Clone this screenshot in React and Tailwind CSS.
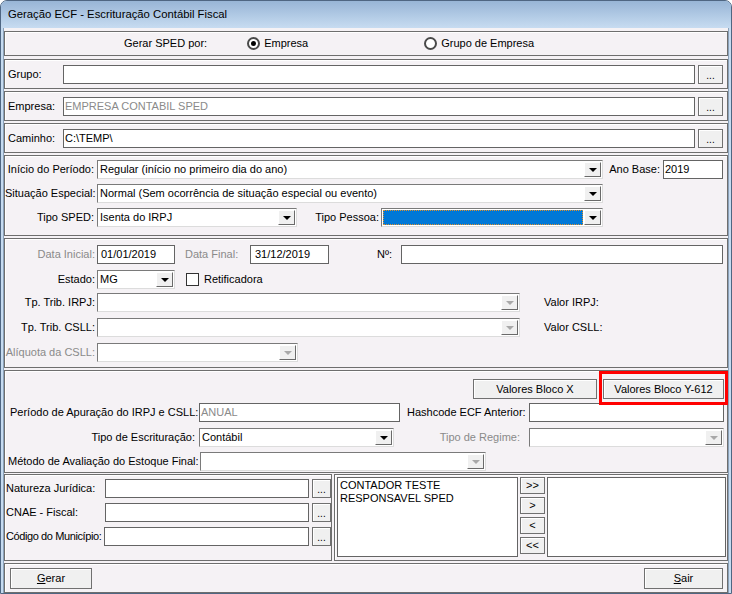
import React from "react";

const font = { fontFamily: '"Liberation Sans", Arial, sans-serif' };

const Panel = ({ className = "", children }) => (
  <div className={`shrink-0 border border-[#6e6e6e] shadow-[inset_1px_1px_0_#ffffff] ${className}`}>{children}</div>
);

const TextBox = ({ w, value = "", gray = false, className = "" }) => (
  <div
    className={`h-[19px] shrink-0 border border-[#646464] bg-white flex items-center pl-[1px] leading-none whitespace-nowrap overflow-hidden ${gray ? "text-[#8a8a8a]" : "text-black"} ${className}`}
    style={{ width: w }}
  >
    {value}
  </div>
);

const Arrow = ({ disabled }) => (
  <div className="w-[17px] h-full bg-[#f0f0f0] border-t border-l border-t-white border-l-white border-b border-r border-b-[#6a6a6a] border-r-[#6a6a6a] flex items-center justify-center">
    <div
      className={`w-0 h-0 border-l-[4px] border-r-[4px] border-t-[4px] border-l-transparent border-r-transparent ${disabled ? "border-t-[#a8a8a8]" : "border-t-black"}`}
    />
  </div>
);

const Combo = ({ w, value = "", disabled = false, selected = false, className = "" }) => (
  <div
    className={`h-[19px] shrink-0 border border-t-[#7a7a7a] border-l-[#7a7a7a] border-b-[#dcdcdc] border-r-[#dcdcdc] bg-white flex items-stretch p-[1px] ${className}`}
    style={{ width: w }}
  >
    {selected ? (
      <div className="flex-1 bg-[#0078d7] border border-dotted border-[#e0902a] mr-[1px]" />
    ) : (
      <div className={`flex-1 flex items-center pl-[1px] leading-none whitespace-nowrap overflow-hidden ${disabled ? "text-[#8a8a8a]" : "text-black"}`}>
        {value}
      </div>
    )}
    <Arrow disabled={disabled} />
  </div>
);

const Btn = ({ w, h = 19, children, className = "" }) => (
  <div
    className={`shrink-0 border border-[#707070] bg-[#f0f0f0] shadow-[inset_1px_1px_0_#ffffff] flex items-center justify-center leading-none text-black ${className}`}
    style={{ width: w, height: h }}
  >
    {children}
  </div>
);

const Dots = ({ w = 25, className = "" }) => (
  <Btn w={w} className={className}>
    <span className="text-[10px] mt-[3px]">...</span>
  </Btn>
);

const Label = ({ w, children, gray = false, right = true, className = "" }) => (
  <div
    className={`shrink-0 whitespace-nowrap ${right ? "text-right" : ""} ${gray ? "text-[#8a8a8a]" : "text-black"} ${className}`}
    style={{ width: w }}
  >
    {children}
  </div>
);

const Radio = ({ checked }) => (
  <div className="w-[13px] h-[13px] rounded-full border-2 border-[#4a4a4a] bg-white flex items-center justify-center">
    {checked && <div className="w-[5px] h-[5px] rounded-full bg-black" />}
  </div>
);

export default function App() {
  return (
    <div className="w-[732px] h-[594px] overflow-hidden text-[11px]" style={font}>
      <div className="w-full h-full rounded-t-[7px] border border-[#4f6682] bg-[#c6dbf0] flex flex-col">
        {/* title bar */}
        <div className="h-[27px] shrink-0 rounded-t-[6px] bg-gradient-to-b from-[#98b5d6] to-[#c7dcf1] flex items-center pl-[7px]">
          <span className="text-[11.3px] text-black">Geração ECF - Escrituração Contábil Fiscal</span>
        </div>

        <div className="flex-1 mx-[2px] bg-[#f5f2f5] border-l border-r border-[#8aa0b8] pt-[3px] flex flex-col">
          {/* Gerar SPED por */}
          <Panel className="h-[25px] flex items-center">
            <span className="ml-[119px]">Gerar SPED por:</span>
            <div className="ml-[40px] flex items-center gap-[4px]">
              <Radio checked />
              <span>Empresa</span>
            </div>
            <div className="ml-[116px] flex items-center gap-[4px]">
              <Radio />
              <span>Grupo de Empresa</span>
            </div>
          </Panel>

          {/* Grupo */}
          <Panel className="mt-[3px] h-[30px] flex items-center">
            <Label w={58} right={false} className="pl-[3px]">Grupo:</Label>
            <TextBox w={632} />
            <Dots className="ml-[3px]" />
          </Panel>

          <Panel className="mt-[2px] h-[30px] flex items-center">
            <Label w={58} right={false} className="pl-[3px]">Empresa:</Label>
            <TextBox w={632} value="EMPRESA CONTABIL SPED" gray />
            <Dots className="ml-[3px]" />
          </Panel>

          <Panel className="mt-[2px] h-[30px] flex items-center">
            <Label w={58} right={false} className="pl-[3px]">Caminho:</Label>
            <TextBox w={632} value="C:\TEMP\" />
            <Dots className="ml-[3px]" />
          </Panel>

          {/* Periodo */}
          <Panel className="mt-[2px] h-[81px] flex flex-col pt-[4px] gap-[5px]">
            <div className="flex items-center">
              <Label w={92} className="pr-[3px]">Início do Período:</Label>
              <Combo w={506} value="Regular (início no primeiro dia do ano)" />
              <Label w={60} className="pr-[3px]">Ano Base:</Label>
              <TextBox w={60} value="2019" />
            </div>
            <div className="flex items-center">
              <Label w={92} className="pr-[3px]">Situação Especial:</Label>
              <Combo w={506} value="Normal (Sem ocorrência de situação especial ou evento)" />
            </div>
            <div className="flex items-center">
              <Label w={92} className="pr-[3px]">Tipo SPED:</Label>
              <Combo w={200} value="Isenta do IRPJ" />
              <Label w={84} className="pr-[2px]">Tipo Pessoa:</Label>
              <Combo w={222} selected />
            </div>
          </Panel>

          {/* Datas */}
          <Panel className="mt-[2px] h-[130px] flex flex-col pt-[6px]">
            <div className="flex items-center">
              <Label w={92} gray className="pr-[2px]">Data Inicial:</Label>
              <TextBox w={78} value="01/01/2019" className="pl-[3px]" />
              <Label w={75} gray right={false} className="pl-[10px]">Data Final:</Label>
              <TextBox w={79} value="31/12/2019" className="pl-[4px]" />
              <Label w={72} right={false} className="pl-[48px]">Nº:</Label>
              <TextBox w={322} />
            </div>
            <div className="mt-[6px] flex items-center">
              <Label w={92} className="pr-[2px]">Estado:</Label>
              <Combo w={78} value="MG" />
              <div className="ml-[11px] w-[13px] h-[13px] border border-[#333] bg-white" />
              <span className="ml-[5px]">Retificadora</span>
            </div>
            <div className="mt-[4px] flex items-center">
              <Label w={92} className="pr-[2px]">Tp. Trib. IRPJ:</Label>
              <Combo w={423} disabled />
              <span className="ml-[24px]">Valor IRPJ:</span>
            </div>
            <div className="mt-[6px] flex items-center">
              <Label w={92} className="pr-[2px]">Tp. Trib. CSLL:</Label>
              <Combo w={423} disabled />
              <span className="ml-[24px]">Valor CSLL:</span>
            </div>
            <div className="mt-[6px] flex items-center">
              <Label w={92} gray className="pr-[2px]">Alíquota da CSLL:</Label>
              <Combo w={201} disabled />
            </div>
          </Panel>

          {/* Blocos */}
          <Panel className="mt-[2px] h-[103px] relative flex flex-col pt-[8px]">
            <div className="flex items-center">
              <Btn w={124} h={20} className="ml-[468px]">Valores Bloco X</Btn>
              <Btn w={121} h={20} className="ml-[6px]">Valores Bloco Y-612</Btn>
            </div>
            <div className="absolute left-[594px] top-[0px] w-[129px] h-[34px] border-[3px] border-[#ff0000]" />
            <div className="mt-[4px] flex items-center">
              <Label w={194} right={false} className="pl-[5px]">Período de Apuração do IRPJ e CSLL:</Label>
              <TextBox w={201} value="ANUAL" gray />
              <Label w={129} right={false} className="pl-[7px]">Hashcode ECF Anterior:</Label>
              <TextBox w={195} />
            </div>
            <div className="mt-[6px] flex items-center">
              <Label w={194} className="pr-[4px]">Tipo de Escrituração:</Label>
              <Combo w={195} value="Contábil" />
              <Label w={135} gray className="pr-[9px]">Tipo de Regime:</Label>
              <Combo w={195} disabled />
            </div>
            <div className="mt-[5px] flex items-center">
              <Label w={195} right={false} className="pl-[3px]">Método de Avaliação do Estoque Final:</Label>
              <Combo w={286} disabled />
            </div>
          </Panel>

          {/* Natureza / listas */}
          <div className="mt-[1px] h-[87px] shrink-0 flex gap-[2px]">
            <Panel className="w-[328px] flex flex-col pt-[4px] gap-[5px]">
              <div className="flex items-center">
                <Label w={100} right={false} className="pl-[1px]">Natureza Jurídica:</Label>
                <TextBox w={204} />
                <Dots w={19} className="ml-[3px]" />
              </div>
              <div className="flex items-center">
                <Label w={100} right={false} className="pl-[1px]">CNAE - Fiscal:</Label>
                <TextBox w={204} />
                <Dots w={19} className="ml-[3px]" />
              </div>
              <div className="flex items-center">
                <Label w={99} right={false} className="pl-[1px] tracking-[-0.4px]">Código do Município:</Label>
                <TextBox w={205} />
                <Dots w={19} className="ml-[3px]" />
              </div>
            </Panel>
            <Panel className="flex-1 flex items-start pt-[2px] pl-[2px] gap-[2px]">
              <div className="w-[181px] h-[80px] border border-[#646464] bg-white pl-[2px] pt-[1px] leading-[13px]">
                <div>CONTADOR TESTE</div>
                <div>RESPONSAVEL SPED</div>
              </div>
              <div className="flex flex-col gap-[3px]">
                <Btn w={25} h={17}>&gt;&gt;</Btn>
                <Btn w={25} h={17}>&gt;</Btn>
                <Btn w={25} h={17}>&lt;</Btn>
                <Btn w={25} h={17}>&lt;&lt;</Btn>
              </div>
              <div className="w-[179px] h-[80px] border border-[#646464] bg-white" />
            </Panel>
          </div>

          {/* Botoes */}
          <Panel className="mt-[2px] h-[30px] flex items-center justify-between pl-[5px] pr-[4px]">
            <Btn w={82} h={21}><span><span className="underline">G</span>erar</span></Btn>
            <Btn w={79} h={21}><span><span className="underline">S</span>air</span></Btn>
          </Panel>
        </div>
      </div>
    </div>
  );
}
